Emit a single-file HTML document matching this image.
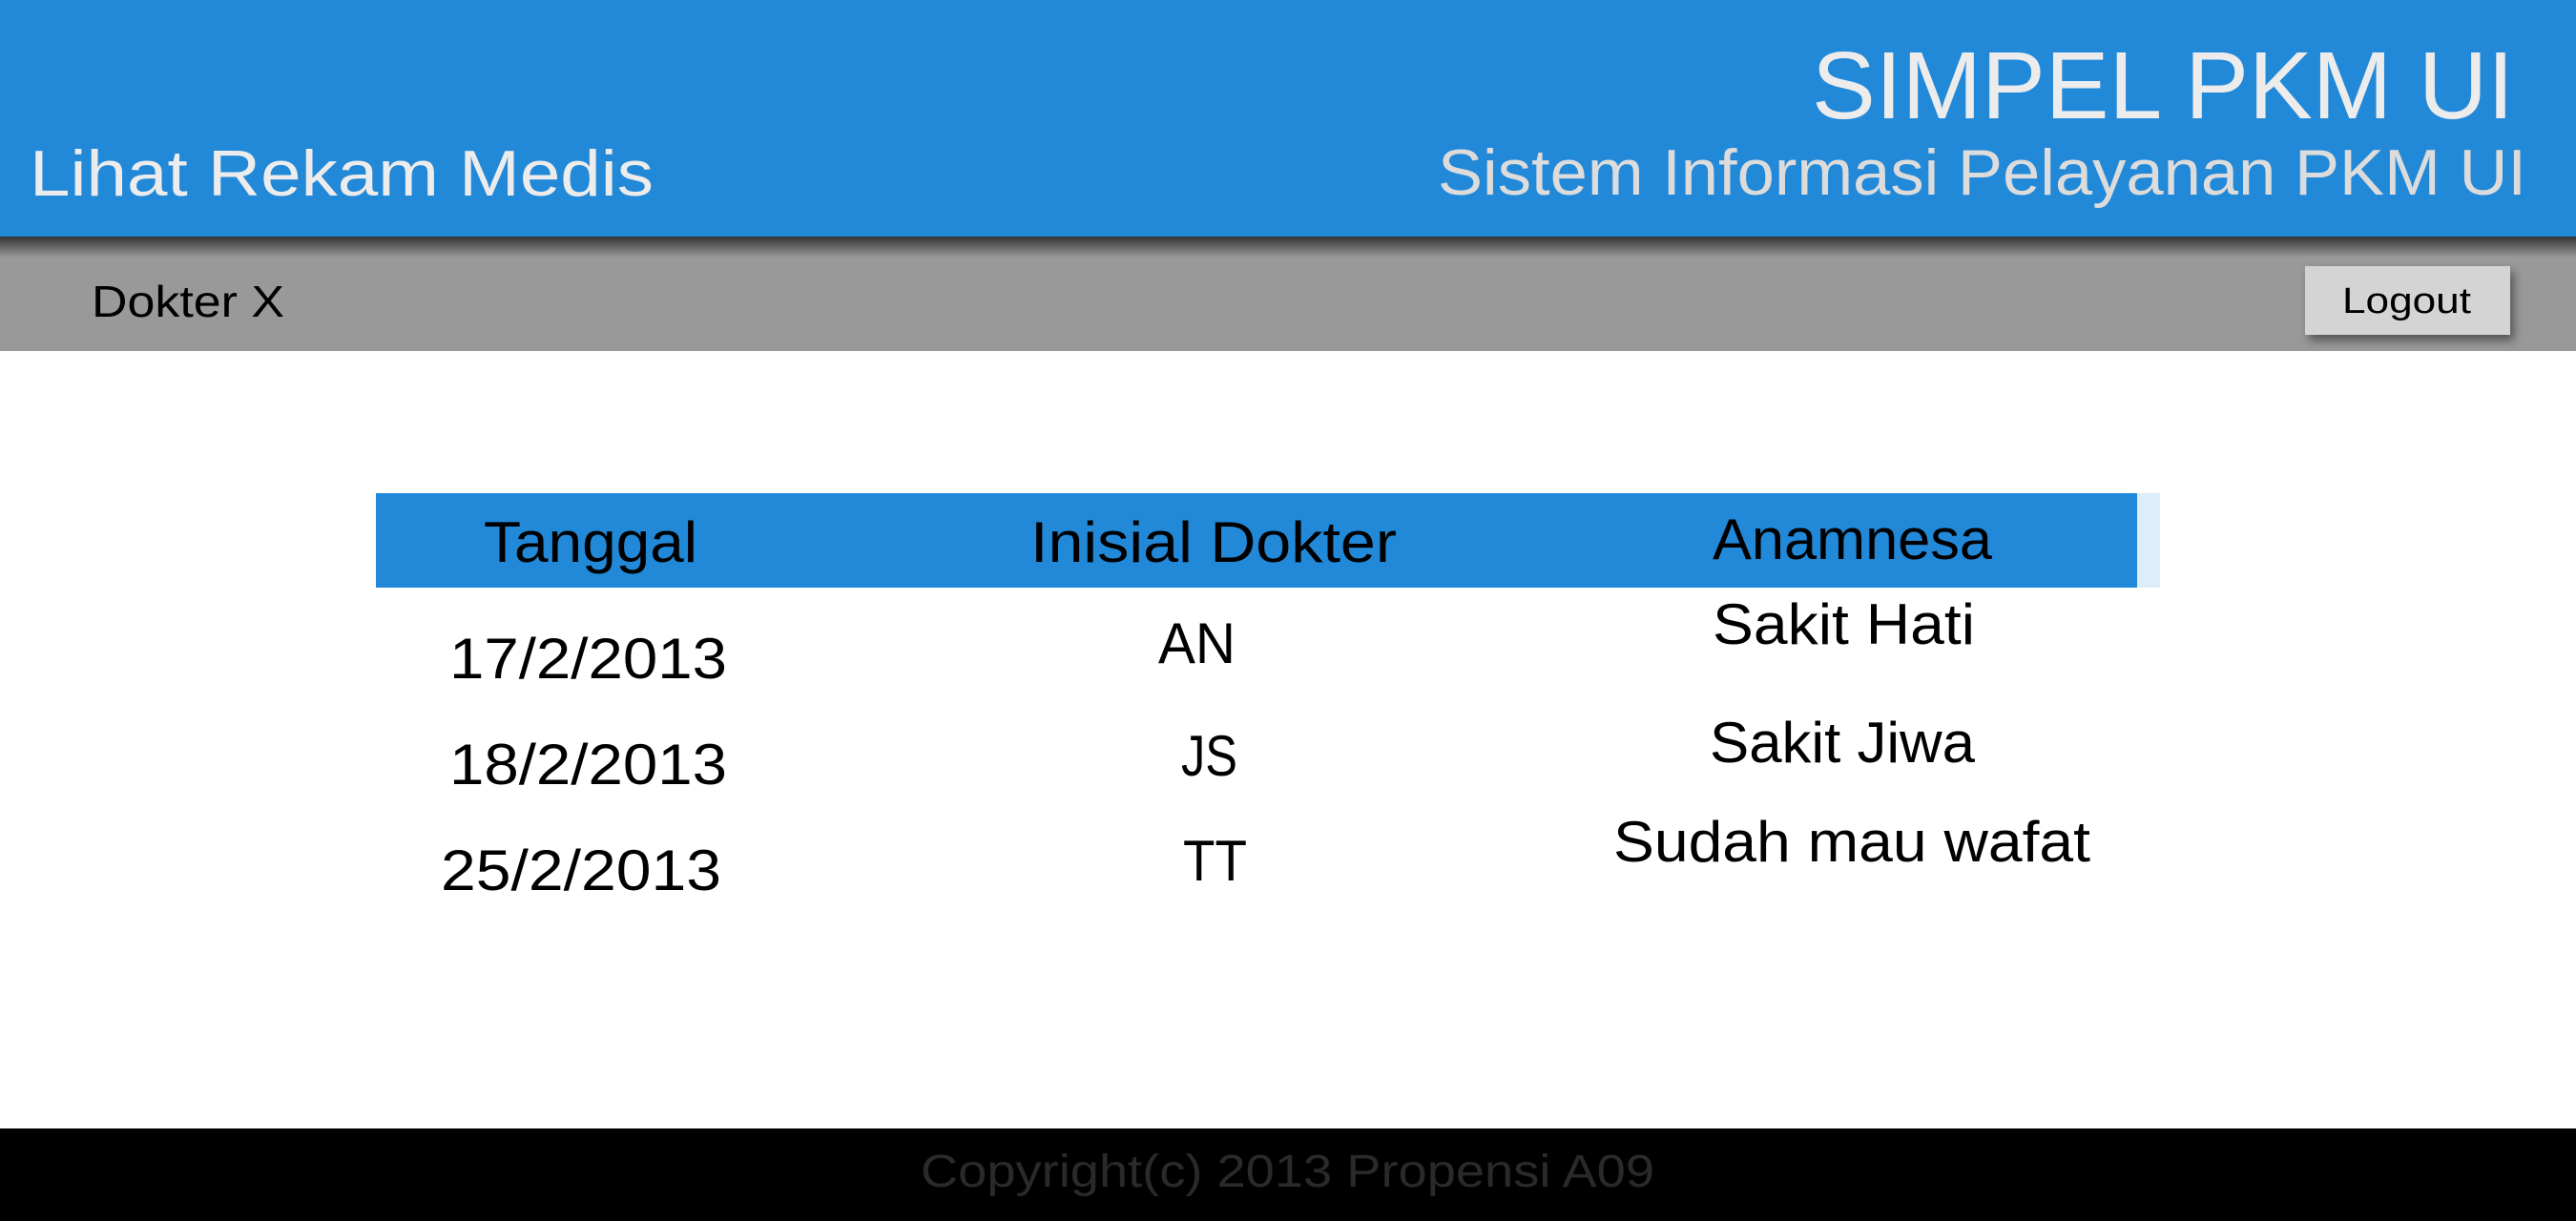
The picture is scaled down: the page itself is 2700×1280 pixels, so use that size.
<!DOCTYPE html>
<html><head><meta charset="utf-8"><style>html,body{margin:0;padding:0;width:2700px;height:1280px;overflow:hidden;background:#fff}svg{display:block}</style></head>
<body>
<svg width="2700" height="1280" viewBox="0 0 2700 1280" xmlns="http://www.w3.org/2000/svg" font-family="'Liberation Sans', sans-serif">
<defs>
<linearGradient id="sh" x1="0" y1="0" x2="0" y2="1">
<stop offset="0" stop-color="#333"/><stop offset="1" stop-color="#999"/>
</linearGradient>
<filter id="bs" x="-20%" y="-20%" width="150%" height="160%"><feDropShadow dx="4" dy="6" stdDeviation="5" flood-color="#000" flood-opacity="0.45"/></filter>
</defs>
<rect x="0" y="0" width="2700" height="248" fill="#2288d8"/>
<rect x="0" y="248" width="2700" height="120" fill="#999999"/>
<rect x="0" y="248" width="2700" height="22" fill="url(#sh)"/>
<rect x="0" y="1183" width="2700" height="97" fill="#000"/>

<g fill="#ececec">
<text x="1899" y="124" font-size="100" textLength="736" lengthAdjust="spacingAndGlyphs">SIMPEL PKM UI</text>
<text x="1507" y="204" font-size="68" fill="#dcdcdc" textLength="1141" lengthAdjust="spacingAndGlyphs">Sistem Informasi Pelayanan PKM UI</text>
<text x="31" y="205" font-size="68" textLength="654" lengthAdjust="spacingAndGlyphs">Lihat Rekam Medis</text>
</g>
<text x="96" y="332" font-size="46" fill="#000" textLength="202" lengthAdjust="spacingAndGlyphs">Dokter X</text>
<rect x="2416" y="279" width="215" height="72" fill="#d4d4d4" filter="url(#bs)"/>
<text x="2455" y="328" font-size="38" fill="#000" textLength="135" lengthAdjust="spacingAndGlyphs">Logout</text>

<rect x="394" y="517" width="1846" height="99" fill="#2288d8"/>
<rect x="2240" y="517" width="24" height="99" fill="#dceefa"/>
<g fill="#000" font-size="60">
<text x="507" y="589" textLength="224" lengthAdjust="spacingAndGlyphs">Tanggal</text>
<text x="1080" y="589" textLength="384" lengthAdjust="spacingAndGlyphs">Inisial Dokter</text>
<text x="1795" y="586" textLength="293" lengthAdjust="spacingAndGlyphs">Anamnesa</text>
<text x="471" y="711" textLength="291" lengthAdjust="spacingAndGlyphs">17/2/2013</text>
<text x="1214" y="695" textLength="81" lengthAdjust="spacingAndGlyphs">AN</text>
<text x="1795" y="675" textLength="275" lengthAdjust="spacingAndGlyphs">Sakit Hati</text>
<text x="471" y="822" textLength="291" lengthAdjust="spacingAndGlyphs">18/2/2013</text>
<text x="1238" y="813" textLength="59" lengthAdjust="spacingAndGlyphs">JS</text>
<text x="1792" y="799" textLength="278" lengthAdjust="spacingAndGlyphs">Sakit Jiwa</text>
<text x="462" y="933" textLength="294" lengthAdjust="spacingAndGlyphs">25/2/2013</text>
<text x="1240" y="923" textLength="67" lengthAdjust="spacingAndGlyphs">TT</text>
<text x="1691" y="903" textLength="500" lengthAdjust="spacingAndGlyphs">Sudah mau wafat</text>
</g>
<text x="965" y="1244" font-size="48" fill="#2a2a2a" textLength="769" lengthAdjust="spacingAndGlyphs">Copyright(c) 2013 Propensi A09</text>
</svg>
</body></html>
